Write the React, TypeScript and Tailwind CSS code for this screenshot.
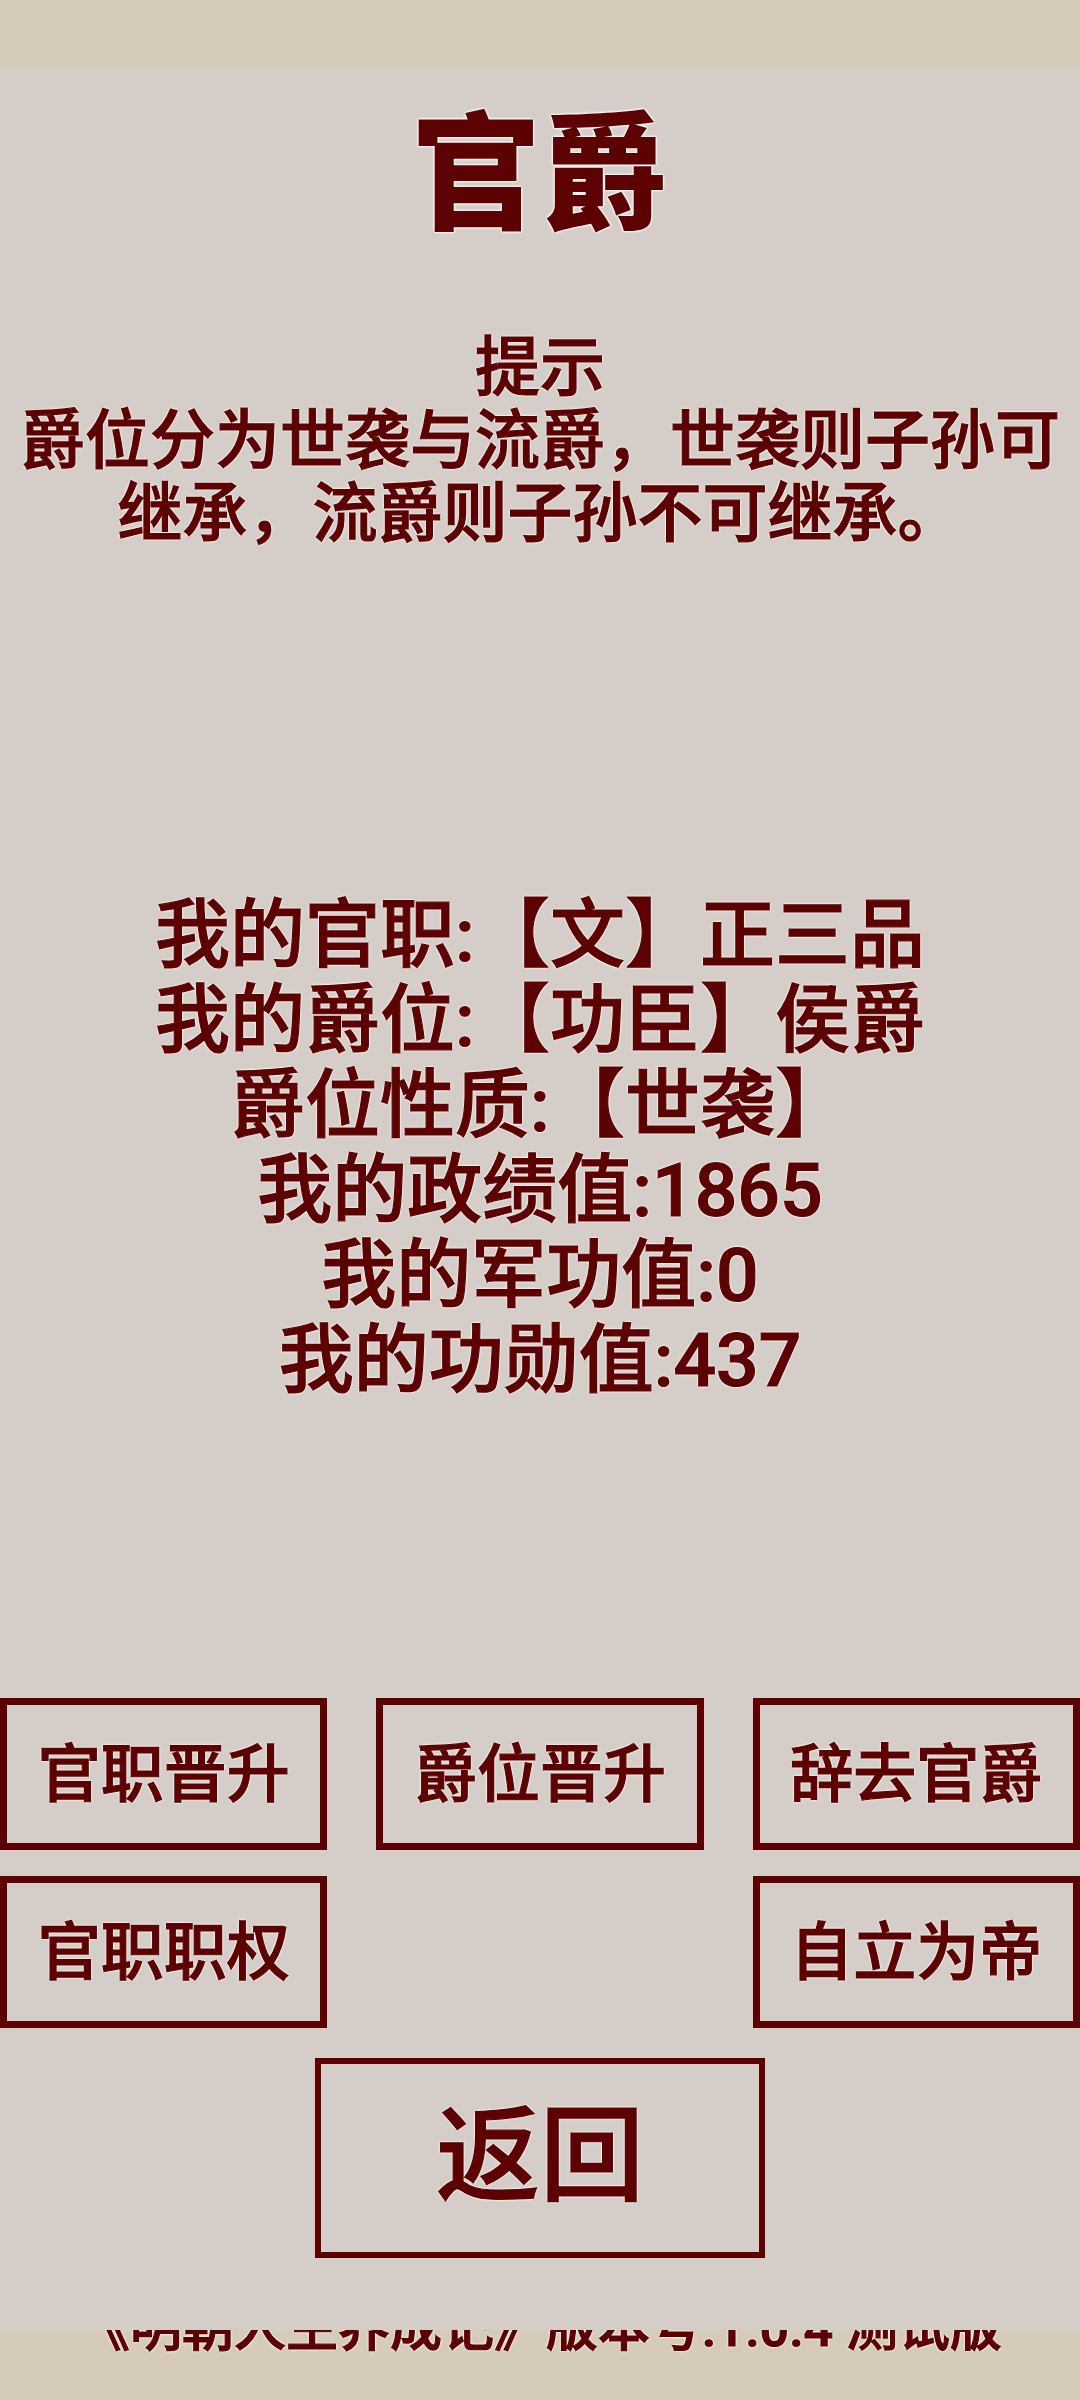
import React from 'react'

// 官爵 page — rank / title overview with action buttons.

const FONT = "font-['Roboto','Noto_Sans_CJK_SC',sans-serif]"
const GLOW = '[text-shadow:0_0_2px_#fff,0_0_2px_#fff,0_0_3px_#fff,0_0_3px_#fff]'
const THICK = '[-webkit-text-stroke:1.2px_#5c0202]'

const stats = [
  '我的官职:【文】正三品',
  '我的爵位:【功臣】侯爵',
  '爵位性质:【世袭】',
  '我的政绩值:1865',
  '我的军功值:0',
  '我的功勋值:437',
]

function ActionButton({ label }: { label: string }) {
  return (
    <button
      className={`flex h-[152px] items-center justify-center border-[7px] border-[#5c0202] bg-transparent text-[63px] font-medium leading-none text-[#5c0202] ${GLOW} ${THICK}`}
    >
      {label}
    </button>
  )
}

export default function App() {
  return (
    <div className={`flex min-h-[2400px] w-[1080px] flex-col bg-[#d6cbba] ${FONT}`}>
      <div className="h-[69px] shrink-0" />

      <main className="flex h-[2261px] shrink-0 flex-col items-center bg-[#d5cdc7] text-[#5c0202]">
        <h1 className={`mt-[43px] text-[128px] font-black leading-none ${GLOW}`}>官爵</h1>

        <div className={`mt-[92px] flex w-full flex-col items-center whitespace-nowrap text-[65px] font-medium leading-[73px] ${GLOW} ${THICK}`}>
          <div>提示</div>
          <div>爵位分为世袭与流爵，世袭则子孙可</div>
          <div>继承，流爵则子孙不可继承。</div>
        </div>

        <div className={`mt-[342px] flex flex-col items-center whitespace-nowrap text-[75px] font-medium leading-[85px] ${GLOW} ${THICK}`}>
          {stats.map(s => (
            <div key={s}>{s}</div>
          ))}
        </div>

        <div className="mt-[295px] grid w-full grid-cols-3 gap-x-[49px] gap-y-[26px]">
          <ActionButton label="官职晋升" />
          <ActionButton label="爵位晋升" />
          <ActionButton label="辞去官爵" />
          <ActionButton label="官职职权" />
          <div />
          <ActionButton label="自立为帝" />
        </div>

        <button
          className={`mt-[30px] flex h-[200px] w-[450px] items-center justify-center border-[6px] border-[#5c0202] text-[104px] font-medium leading-none text-[#5c0202] ${GLOW} ${THICK}`}
        >
          返回
        </button>
      </main>

      <footer className="h-[70px] shrink-0 overflow-hidden">
        <div className={`-mt-[27px] whitespace-nowrap text-center text-[52px] font-medium leading-none text-[#5c0202] ${GLOW} ${THICK}`}>
          《明朝人生养成记》版本号:1.0.4 测试版
        </div>
      </footer>
    </div>
  )
}
